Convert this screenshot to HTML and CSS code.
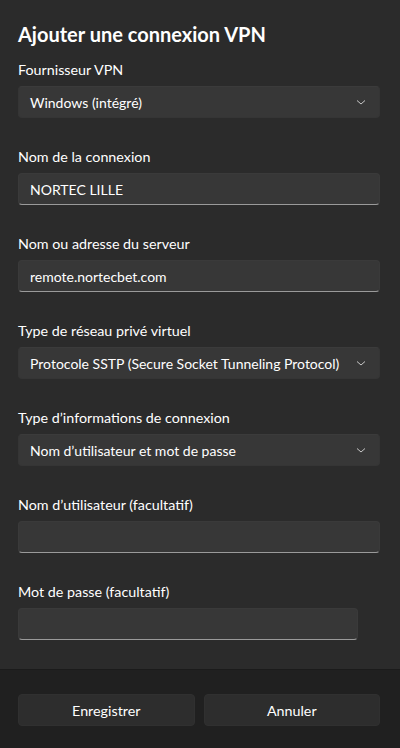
FILE: index.html
```html
<!DOCTYPE html>
<html lang="fr">
<head>
<meta charset="utf-8">
<title>Ajouter une connexion VPN</title>
<link rel="stylesheet" href="styles.css">
</head>
<body>
<div class="dialog">
  <div class="content">
    <h1 class="title">Ajouter une connexion VPN</h1>

    <div class="field">
      <div class="label">Fournisseur VPN</div>
      <div class="select"><span>Windows (intégré)</span><svg class="chev" width="12" height="12" viewBox="0 0 12 12"><polyline points="2,4.5 6,8 10,4.5" fill="none" stroke="#c8c8c8" stroke-width="1"/></svg></div>
    </div>

    <div class="field">
      <div class="label">Nom de la connexion</div>
      <div class="input"><span>NORTEC LILLE</span></div>
    </div>

    <div class="field">
      <div class="label">Nom ou adresse du serveur</div>
      <div class="input"><span>remote.nortecbet.com</span></div>
    </div>

    <div class="field">
      <div class="label">Type de réseau privé virtuel</div>
      <div class="select"><span>Protocole SSTP (Secure Socket Tunneling Protocol)</span><svg class="chev" width="12" height="12" viewBox="0 0 12 12"><polyline points="2,4.5 6,8 10,4.5" fill="none" stroke="#c8c8c8" stroke-width="1"/></svg></div>
    </div>

    <div class="field">
      <div class="label">Type d’informations de connexion</div>
      <div class="select"><span>Nom d’utilisateur et mot de passe</span><svg class="chev" width="12" height="12" viewBox="0 0 12 12"><polyline points="2,4.5 6,8 10,4.5" fill="none" stroke="#c8c8c8" stroke-width="1"/></svg></div>
    </div>

    <div class="field">
      <div class="label">Nom d’utilisateur (facultatif)</div>
      <div class="input"></div>
    </div>

    <div class="field">
      <div class="label">Mot de passe (facultatif)</div>
      <div class="input narrow"></div>
    </div>
  </div>

  <div class="footer">
    <button class="btn">Enregistrer</button>
    <button class="btn">Annuler</button>
  </div>
</div>
</body>
</html>
```
FILE: styles.css
```css
html, body {
  margin: 0;
  padding: 0;
  background: #2b2b2b;
}
body {
  font-family: Lato, "Noto Sans", sans-serif;
  color: #ffffff;
  font-size: 14px;
}
.dialog {
  width: 400px;
  height: 748px;
  display: flex;
  flex-direction: column;
  overflow: hidden;
}
.content {
  flex: 1;
  padding: 20px 20px 0 18px;
}
.title {
  margin: 0 0 12px 0;
  font-size: 20px;
  line-height: 28px;
  font-weight: 700;
  white-space: nowrap;
}
.field {
  margin-bottom: 29px;
}
.label {
  line-height: 20px;
  font-size: 14.3px;
  margin-bottom: 6px;
  white-space: nowrap;
}
.select, .input {
  box-sizing: border-box;
  height: 32px;
  width: 362px;
  border-radius: 4px;
  background: #373737;
  border: 1px solid #3a3a3a;
  display: flex;
  align-items: center;
  gap: 8px;
  padding: 0 12px 0 11px;
  font-size: 14px;
  white-space: nowrap;
}
.select {
  border-color: #353535;
  border-top-color: #3b3b3b;
  padding-right: 12px;
}
.chev {
  flex: none;
  margin-left: auto;
}
.input {
  border-bottom: 1px solid #9a9a9a;
}
.input.narrow {
  width: 340px;
}
.footer {
  height: 79px;
  box-sizing: border-box;
  background: #202020;
  border-top: 1px solid #1b1b1b;
  padding: 24px 20px 0 18px;
  display: flex;
  gap: 9px;
}
.btn {
  flex: 1;
  height: 32px;
  border-radius: 4px;
  background: #2d2d2d;
  border: 1px solid #303030;
  color: #ffffff;
  font-family: Lato, "Noto Sans", sans-serif;
  font-size: 14.3px;
  padding: 0;
}
```
